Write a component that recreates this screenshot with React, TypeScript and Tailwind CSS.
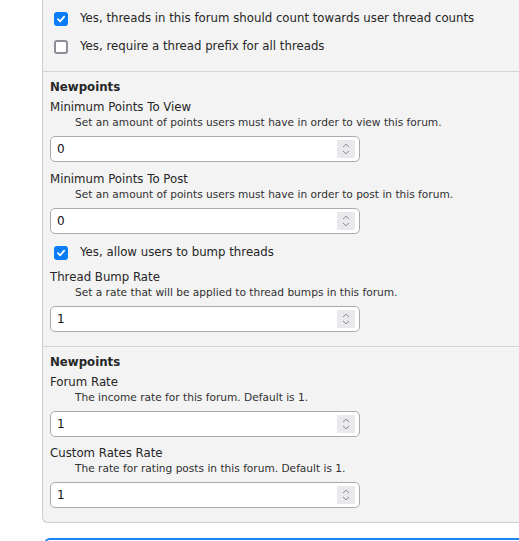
import React from "react";

function Check({ checked }: { checked: boolean }) {
  return checked ? (
    <span className="flex h-[14px] w-[14px] items-center justify-center rounded-[3px] bg-[#0b7cf6]">
      <svg width="10" height="10" viewBox="0 0 10 10">
        <path d="M2 5.2 L4.1 7.3 L8.2 2.6" fill="none" stroke="#fff" strokeWidth="1.8" strokeLinecap="round" strokeLinejoin="round" />
      </svg>
    </span>
  ) : (
    <span className="block h-[14px] w-[14px] rounded-[3px] border-2 border-[#8f8d98] bg-white" />
  );
}

function CheckRow({ checked, label, className = "" }: { checked: boolean; label: string; className?: string }) {
  return (
    <div className={"flex h-[28px] items-center " + className}>
      <div className="w-[30px] pl-[4px]">
        <Check checked={checked} />
      </div>
      <span className="text-[11.75px] text-[#262626]">{label}</span>
    </div>
  );
}

function NumberInput({ value }: { value: string }) {
  return (
    <div className="flex h-[26px] w-[310px] items-center justify-between rounded-[5px] border border-[#ababab] bg-white pl-[6px] pr-[4px]">
      <span className="text-[12px] text-[#111]">{value}</span>
      <span className="flex h-[18px] w-[18px] flex-col items-center justify-center bg-[#e8e8ed]">
        <svg width="10" height="14" viewBox="0 0 10 14">
          <path d="M2 5 L5 2.2 L8 5" fill="none" stroke="#8a8a8f" strokeWidth="1" />
          <path d="M2 9 L5 11.8 L8 9" fill="none" stroke="#8a8a8f" strokeWidth="1" />
        </svg>
      </span>
    </div>
  );
}

function Field({ label, desc, value, className = "" }: { label: string; desc: string; value: string; className?: string }) {
  return (
    <div className={className}>
      <div className="h-[20px] text-[11.75px] leading-[23px] text-[#262626]">{label}</div>
      <div className="h-[13px] pl-[25px] text-[10.6px] leading-[12px] text-[#303030]">{desc}</div>
      <div className="mt-[7px]">
        <NumberInput value={value} />
      </div>
    </div>
  );
}

export default function App() {
  return (
    <div
      className="min-h-screen overflow-hidden bg-white pl-[42px]"
      style={{ fontFamily: '"DejaVu Sans", sans-serif' }}
    >
      <div className="rounded-bl-[6px] border-b border-l border-[#cdcdcd] bg-[#f3f3f3]">
        <div className="border-b border-[#d4d4d4] pl-[7px] pt-[5px] pb-[10px]">
          <CheckRow checked label="Yes, threads in this forum should count towards user thread counts" />
          <CheckRow checked={false} label="Yes, require a thread prefix for all threads" />
        </div>
        <div className="border-b border-[#d4d4d4] pl-[7px] pt-[6px] pb-[14px]">
          <div className="h-[18px] text-[11.75px] font-bold leading-[18px] text-[#262626]">Newpoints</div>
          <Field label="Minimum Points To View" desc="Set an amount of points users must have in order to view this forum." value="0" />
          <Field className="mt-[6px]" label="Minimum Points To Post" desc="Set an amount of points users must have in order to post in this forum." value="0" />
          <CheckRow className="mt-[5px] mb-[-1px]" checked label="Yes, allow users to bump threads" />
          <Field label="Thread Bump Rate" desc="Set a rate that will be applied to thread bumps in this forum." value="1" />
        </div>
        <div className="pl-[7px] pt-[6px] pb-[14px]">
          <div className="h-[18px] text-[11.75px] font-bold leading-[18px] text-[#262626]">Newpoints</div>
          <Field label="Forum Rate" desc="The income rate for this forum. Default is 1." value="1" />
          <Field className="mt-[5px]" label="Custom Rates Rate" desc="The rate for rating posts in this forum. Default is 1." value="1" />
        </div>
      </div>
      <div className="ml-[2px] mt-[15px] h-[20px] rounded-tl-[6px] border-l-2 border-t-2 border-[#1a84f0]" />
    </div>
  );
}
